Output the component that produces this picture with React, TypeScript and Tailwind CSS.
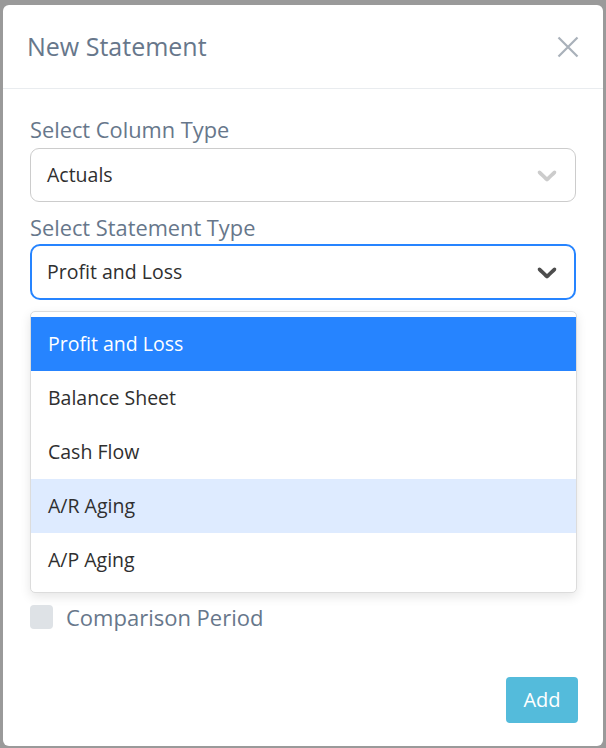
import React from "react";

const Chevron = ({ color }: { color: string }) => (
  <svg width="32" height="32" viewBox="0 0 20 20" fill={color} aria-hidden="true">
    <path d="M4.516 7.548c0.436-0.446 1.043-0.481 1.576 0l3.908 3.747 3.908-3.747c0.533-0.481 1.141-0.446 1.574 0 0.436 0.445 0.408 1.197 0 1.615-0.406 0.418-4.695 4.502-4.695 4.502-0.217 0.223-0.502 0.335-0.787 0.335s-0.57-0.112-0.789-0.335c0 0-4.287-4.084-4.695-4.502s-0.436-1.17 0-1.615z" />
  </svg>
);

const options = ["Profit and Loss", "Balance Sheet", "Cash Flow", "A/R Aging", "A/P Aging"];

export default function App() {
  return (
    <div className="w-[606px] h-[748px] bg-[#9a9a9a] pt-[5px] px-[3px] pb-[2px] font-['Open_Sans',sans-serif]">
      <div className="h-full bg-white rounded-[6px] flex flex-col">
        <div className="h-[84px] shrink-0 px-[24px] flex items-center justify-between border-b border-[#e9ecef]">
          <h2 className="text-[25px] text-[#67778b] leading-none">New Statement</h2>
          <svg width="22" height="22" viewBox="0 0 22 22" className="text-[#a9b1ba]">
            <path d="M1.5 1.5 L20.5 20.5 M20.5 1.5 L1.5 20.5" stroke="currentColor" strokeWidth="2.2" />
          </svg>
        </div>
        <div className="px-[27px] pt-[26px] flex flex-col">
          <label className="text-[21.8px] leading-[30px] text-[#67778b]">Select Column Type</label>
          <div className="mt-[3px] h-[54px] border border-[#cccccc] rounded-[9px] flex items-center justify-between pl-[16px] pr-[12px]">
            <span className="text-[19.5px] text-[#2f2f2f]">Actuals</span>
            <Chevron color="#cccccc" />
          </div>
          <label className="mt-[11px] text-[21.8px] leading-[30px] text-[#67778b]">Select Statement Type</label>
          <div className="mt-[1px] h-[56px] border-2 border-[#2684ff] rounded-[10px] flex items-center justify-between pl-[15px] pr-[11px]">
            <span className="text-[19.5px] text-[#2f2f2f]">Profit and Loss</span>
            <Chevron color="#4d4d4d" />
          </div>
          <div className="mt-[11px] -mr-[1px] border border-[#dcdcdc] rounded-[5px] py-[5px] bg-white shadow-[0_4px_11px_rgba(0,0,0,0.1)]">
            {options.map((o, i) => (
              <div
                key={o}
                className={
                  "h-[54px] flex items-center px-[17px] text-[19.5px] " +
                  (i === 0
                    ? "bg-[#2684ff] text-white"
                    : i === 3
                    ? "bg-[#deebff] text-[#2f2f2f]"
                    : "text-[#2f2f2f]")
                }
              >
                {o}
              </div>
            ))}
          </div>
          <div className="mt-[12px] flex items-center">
            <div className="w-[23px] h-[24px] rounded-[4px] bg-[#dee2e6]" />
            <span className="ml-[13px] text-[22px] text-[#67778b] leading-[24px]">Comparison Period</span>
          </div>
        </div>
        <div className="mt-auto flex justify-end pr-[25px] pb-[23px]">
          <button className="w-[72px] h-[46px] rounded-[4px] bg-[#54bbdb] text-white text-[20px]">Add</button>
        </div>
      </div>
    </div>
  );
}
